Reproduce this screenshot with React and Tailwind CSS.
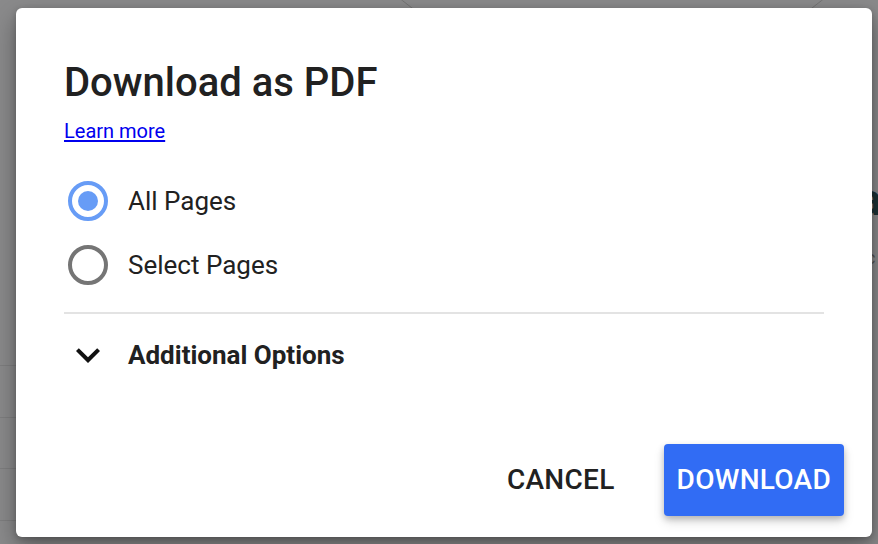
import React from "react";

function Radio({ checked }) {
  return (
    <div className="w-[48px] h-[40px] flex items-center justify-center shrink-0">
      {checked ? (
        <div className="w-[40px] h-[40px] rounded-full border-[4px] border-[#679cf6] flex items-center justify-center">
          <div className="w-[20px] h-[20px] rounded-full bg-[#679cf6]" />
        </div>
      ) : (
        <div className="w-[40px] h-[40px] rounded-full border-[4px] border-[#757575]" />
      )}
    </div>
  );
}

export default function App() {
  return (
    <div className="relative w-[878px] h-[544px] overflow-hidden bg-[#8a8a8b] font-['Roboto',sans-serif]">
      {/* faint page content behind the scrim */}
      <div className="absolute left-[281px] top-[-586px] w-[662px] h-[662px] rounded-full border-[1.5px] border-[#737373]" />
      <div className="absolute left-0 top-[365px] w-[20px] h-px bg-[#7e7e7f]" />
      <div className="absolute left-0 top-[417px] w-[20px] h-px bg-[#7e7e7f]" />
      <div className="absolute left-0 top-[468px] w-[20px] h-px bg-[#7e7e7f]" />
      <div className="absolute left-0 top-[520px] w-[20px] h-px bg-[#7e7e7f]" />
      <div className="absolute left-[858px] top-[170px] text-[44px] font-bold leading-[60px] text-[#1c3236]">a</div>
      <div className="absolute left-[866px] top-[248px] text-[18px] leading-[20px] text-[#555]">c</div>

      <div className="relative pl-[16px] pt-[8px]">
        <div className="w-[856px] h-[529px] bg-white rounded-[6px] shadow-[0_10px_24px_rgba(0,0,0,0.35),0_2px_6px_rgba(0,0,0,0.2)] flex flex-col">
          <div className="px-[48px] pt-[51px] flex flex-col">
            <h1 className="text-[40px] leading-[48px] font-medium text-[#212121]">Download as PDF</h1>
            <a href="#" className="mt-[12px] self-start text-[20px] leading-[24px] text-[#0000ee] underline underline-offset-[2px]">
              Learn more
            </a>
            <div className="mt-[38px] flex flex-col gap-[24px]">
              <div className="flex items-center gap-[16px] h-[40px]">
                <Radio checked />
                <span className="text-[26px] leading-[40px] text-[#212121]">All Pages</span>
              </div>
              <div className="flex items-center gap-[16px] h-[40px]">
                <Radio />
                <span className="text-[26px] leading-[40px] text-[#212121]">Select Pages</span>
              </div>
            </div>
            <div className="mt-[27px] h-[2px] bg-[#e3e3e3]" />
            <div className="mt-[21px] flex items-center gap-[16px] h-[40px]">
              <svg width="48" height="48" viewBox="0 0 24 24" className="shrink-0">
                <path d="M16.59 8.59L12 13.17 7.41 8.59 6 10l6 6 6-6z" fill="#111" />
              </svg>
              <span className="text-[26px] leading-[40px] font-bold text-[#212121]">Additional Options</span>
            </div>
          </div>
          <div className="mt-auto flex justify-end items-center gap-[36px] pr-[28px] pb-[21px]">
            <button className="h-[72px] px-[13px] text-[28px] font-medium text-[#212121] tracking-[0.01em]">
              CANCEL
            </button>
            <button className="h-[72px] px-[13px] rounded-[4px] bg-[#316cf4] text-white text-[28px] font-medium tracking-[0.01em] shadow-[0_3px_6px_rgba(0,0,0,0.22),0_6px_12px_rgba(0,0,0,0.12)]">
              DOWNLOAD
            </button>
          </div>
        </div>
      </div>
    </div>
  );
}
